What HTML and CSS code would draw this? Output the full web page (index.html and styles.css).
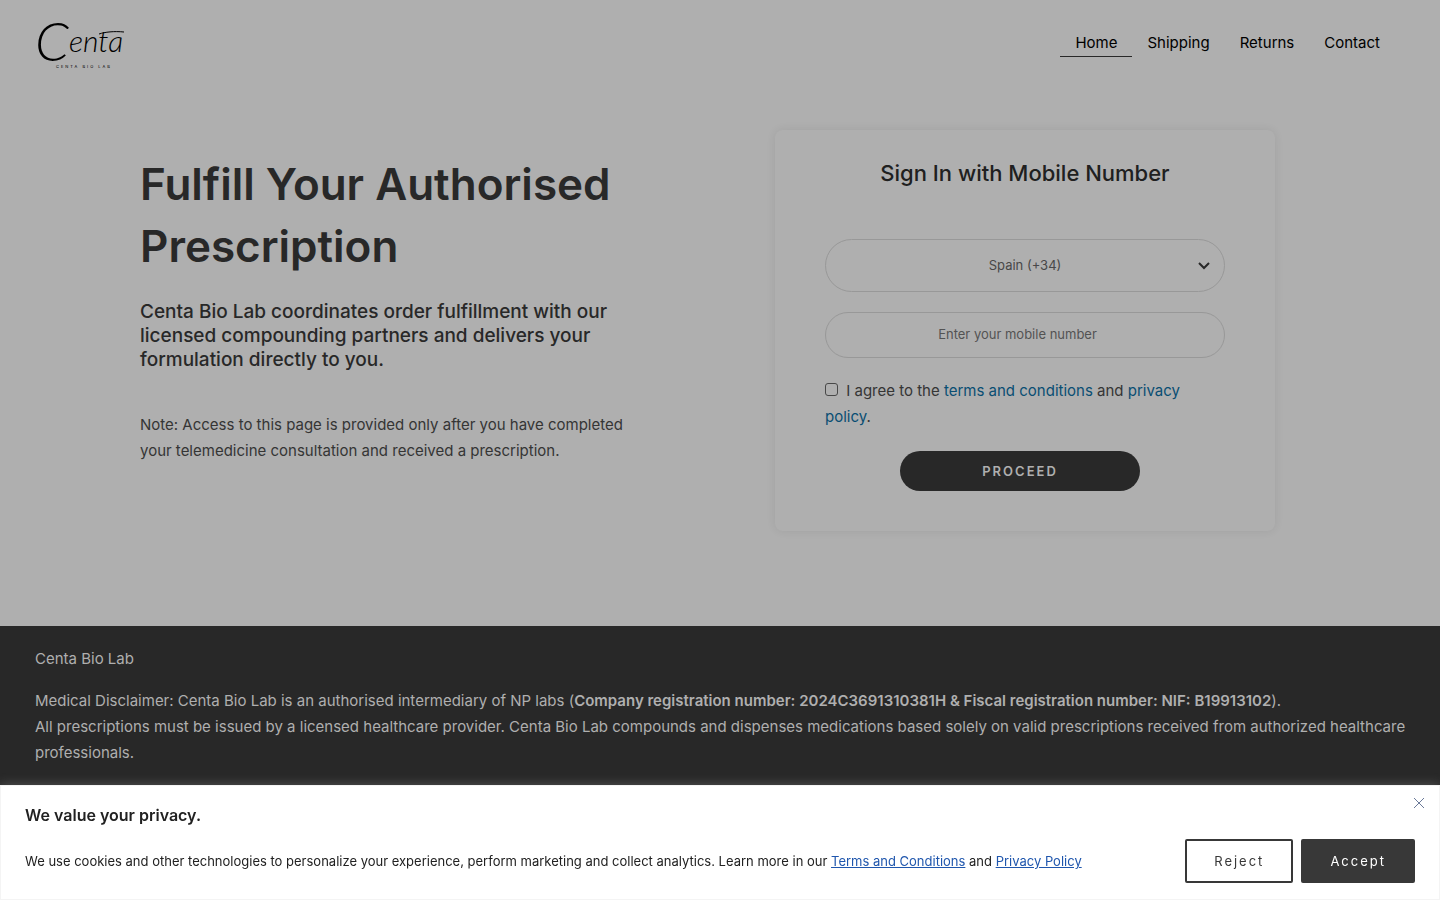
FILE: index.html
```html
<!DOCTYPE html>
<html lang="en">
  <head>
    <meta charset="UTF-8" />
    <meta name="viewport" content="width=device-width, initial-scale=1.0" />
    <title>Centa Bio Lab</title>
    <link rel="stylesheet" href="styles.css">
  </head>

  <body>
    <header>
      <a href="#" class="logo" aria-label="Centa Bio Lab">
        <svg width="90" height="72" viewBox="0 0 90 72">
          <text x="0" y="54" class="logo-script"><tspan class="logo-cap">C</tspan><tspan dy="-9">enta</tspan></text>
          <path d="M64 27C70 25 79 24 89 25" fill="none" stroke="#000" stroke-width="1" />
          <text x="21" y="61" class="logo-sub">CENTA BIO LAB</text>
        </svg>
      </a>
      <nav>
        <a href="#" class="active">Home</a>
        <a href="#">Shipping</a>
        <a href="#">Returns</a>
        <a href="#">Contact</a>
      </nav>
    </header>

    <main>
      <section class="intro">
        <h1>Fulfill Your Authorised Prescription</h1>
        <h2>Centa Bio Lab coordinates order fulfillment with our licensed compounding partners and delivers your formulation directly to you.</h2>
        <p>Note: Access to this page is provided only after you have completed your telemedicine consultation and received a prescription.</p>
      </section>

      <form class="card">
        <h2>Sign In with Mobile Number</h2>
        <div class="select-wrap">
          <select aria-label="Country code">
            <option>Spain (+34)</option>
          </select>
          <svg class="chevron" width="12" height="8" viewBox="0 0 12 8">
            <path d="M1 1l5 5 5-5" fill="none" stroke="#282828" stroke-width="2" />
          </svg>
        </div>
        <input type="tel" class="mobile" placeholder="Enter your mobile number" aria-label="Mobile number" />
        <div class="agree">
          <input type="checkbox" id="agree" />
          <label for="agree">I agree to the <a href="#">terms and conditions</a> and <a href="#">privacy policy</a>.</label>
        </div>
        <button type="button" class="proceed">PROCEED</button>
      </form>
    </main>

    <footer>
      <p>Centa Bio Lab</p>
      <p>Medical Disclaimer: Centa Bio Lab is an authorised intermediary of NP labs (<strong>Company registration number: 2024C3691310381H &amp; Fiscal registration number: NIF: B19913102</strong>).<br />
      All prescriptions must be issued by a licensed healthcare provider. Centa Bio Lab compounds and dispenses medications based solely on valid prescriptions received from authorized healthcare professionals.</p>
    </footer>

    <section class="cookies">
      <button type="button" class="close" aria-label="Close">
        <svg width="10" height="10" viewBox="0 0 10 10">
          <path d="M0 0l10 10M10 0L0 10" fill="none" stroke="#6b7a99" stroke-width="1" />
        </svg>
      </button>
      <h2>We value your privacy.</h2>
      <div class="cookies-row">
        <p>We use cookies and other technologies to personalize your experience, perform marketing and collect analytics. Learn more in our <a href="#">Terms and Conditions</a> and <a href="#">Privacy Policy</a></p>
        <div class="cookies-buttons">
          <button type="button" class="reject">Reject</button>
          <button type="button" class="accept">Accept</button>
        </div>
      </div>
    </section>
  </body>
</html>
```
FILE: styles.css
```css
* {
  box-sizing: border-box;
}

body {
  margin: 0;
  min-height: 100vh;
  display: flex;
  flex-direction: column;
  background-color: #afafaf;
  color: #353535;
  font-family: Inter, "Liberation Sans", sans-serif;
  font-size: 15px;
  line-height: 26px;
}

h1,
h2,
p {
  margin: 0;
}

a {
  text-decoration: none;
}

button,
input,
select {
  font-family: inherit;
}

header {
  display: flex;
  justify-content: space-between;
  align-items: center;
  height: 86px;
  padding: 0 45px 0 35px;
}

.logo svg {
  display: block;
}

.logo-script {
  font-family: Lato, sans-serif;
  font-size: 30px;
  font-style: italic;
  font-weight: 300;
}

.logo-cap {
  font-size: 54px;
}

.logo-sub {
  font-size: 4px;
  letter-spacing: 2px;
}

nav {
  display: flex;
}

nav a {
  padding: 0 15px;
  color: #000;
  border-bottom: 1px solid transparent;
}

nav .active {
  border-bottom-color: #282828;
}

main {
  display: grid;
  grid-template-columns: 1fr 1fr;
  gap: 60px;
  width: 100%;
  max-width: 1200px;
  margin: 0 auto;
  padding: 44px 20px 95px;
}

.intro {
  padding-top: 23px;
}

.intro h1 {
  max-width: 500px;
  color: #282828;
  font-size: 44px;
  font-weight: 600;
  line-height: 62px;
}

.intro h2 {
  max-width: 500px;
  margin: 23px 0 40px;
  color: #282828;
  font-size: 19px;
  font-weight: 500;
  line-height: 24px;
}

.intro p {
  max-width: 500px;
}

.card {
  display: flex;
  flex-direction: column;
  width: 100%;
  max-width: 500px;
  margin: 0 auto;
  padding: 28px 50px 40px;
  border-radius: 8px;
  box-shadow: 0 0 10px rgba(0, 0, 0, 0.08);
}

.card h2 {
  margin-bottom: 50px;
  color: #202020;
  font-size: 22px;
  font-weight: 500;
  line-height: 31px;
  text-align: center;
}

.select-wrap {
  position: relative;
}

.select-wrap select {
  display: block;
  width: 100%;
  height: 53px;
  padding: 0 15px 2px;
  appearance: none;
  background: none;
  border: 1px solid #989898;
  border-radius: 27px;
  color: #484848;
  font-size: 13px;
  text-align: center;
  text-align-last: center;
}

.chevron {
  position: absolute;
  top: 23px;
  right: 15px;
  pointer-events: none;
}

.mobile {
  width: 100%;
  height: 46px;
  margin: 20px 0;
  padding: 0 30px 2px 15px;
  background: none;
  border: 1px solid #989898;
  border-radius: 23px;
  font-size: 13px;
  text-align: center;
}

.mobile::placeholder {
  color: #535353;
}

.agree input {
  width: 13px;
  height: 13px;
  margin: 0 4px 0 0;
  appearance: none;
  border: 1px solid #484848;
  border-radius: 3px;
}

.agree input:checked {
  background-color: #282828;
}

.agree a {
  color: #094e73;
}

.proceed {
  width: 240px;
  height: 40px;
  margin: 21px 0 0 75px;
  background-color: #282828;
  border: 0;
  border-radius: 20px;
  color: #afafaf;
  font-size: 13px;
  font-weight: 600;
  letter-spacing: 2px;
}

footer {
  flex: 1;
  padding: 20px 30px 150px 35px;
  background-color: #282828;
  color: #afafaf;
}

footer p {
  margin-bottom: 16px;
}

footer strong {
  font-weight: 600;
}

.cookies {
  position: fixed;
  right: 0;
  bottom: 0;
  left: 0;
  padding: 16px 24px;
  background-color: #fff;
  border: 1px solid #f4f4f4;
  box-shadow: 0 -1px 10px rgba(172, 171, 171, 0.3);
  color: #212121;
}

.cookies h2 {
  font-size: 16px;
  font-weight: 600;
  line-height: 26px;
}

.close {
  position: absolute;
  top: 12px;
  right: 15px;
  padding: 0;
  background: none;
  border: 0;
  line-height: 10px;
}

.cookies-row {
  display: flex;
  justify-content: space-between;
  align-items: center;
  margin-top: 11px;
}

.cookies-row p {
  font-size: 13px;
}

.cookies-row a {
  color: #1f56ad;
  text-decoration: underline;
}

.cookies-buttons {
  display: flex;
  gap: 8px;
}

.cookies-buttons button {
  height: 44px;
  padding: 0 27px;
  background-color: #fff;
  border: 2px solid #383838;
  border-radius: 2px;
  color: #383838;
  font-size: 13px;
  letter-spacing: 2px;
}

.cookies-buttons .accept {
  background-color: #383838;
  color: #fff;
}
```
